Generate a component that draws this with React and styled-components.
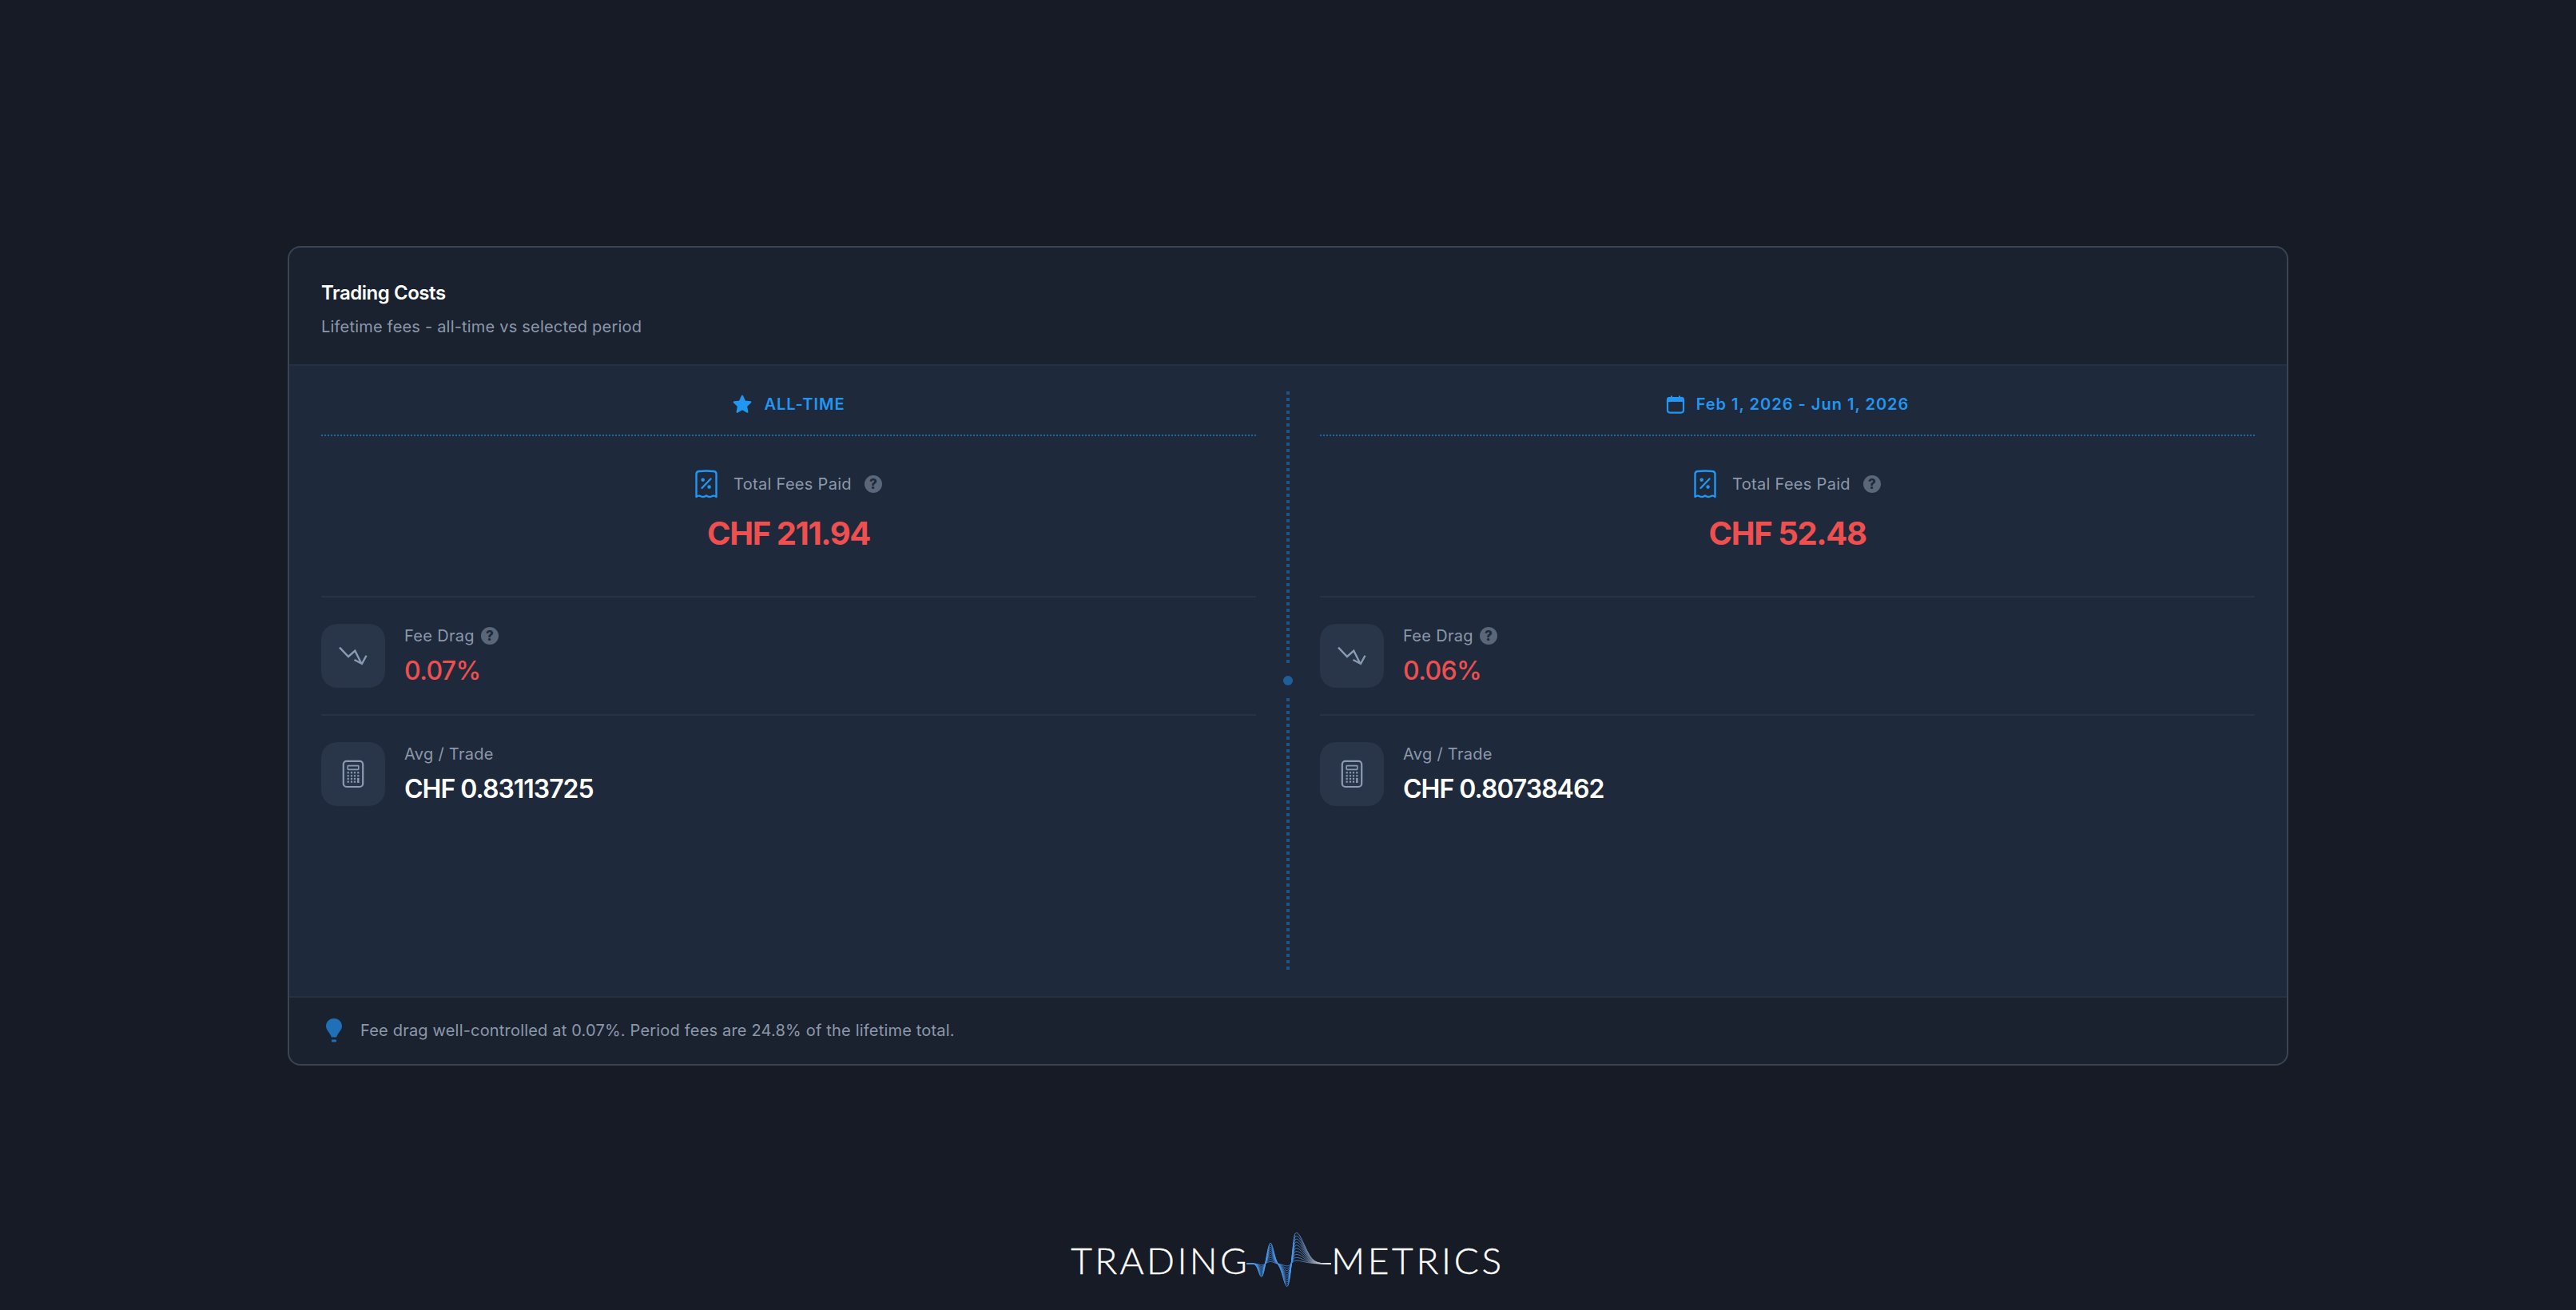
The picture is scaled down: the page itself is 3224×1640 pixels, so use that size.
import React from "react";
import styled, {createGlobalStyle} from "styled-components";

const GlobalStyle = createGlobalStyle`
  html, body {
    margin: 0;
    background: #161b26;
  }
  * {
    box-sizing: border-box;
  }
`

const Page = styled.div`
  width: 3224px;
  height: 1640px;
  padding-top: 308px;
  display: flex;
  flex-direction: column;
  align-items: center;
  overflow: hidden;
  font-family: Inter, "Liberation Sans", sans-serif;
`

const Card = styled.section`
  width: 2504px;
  height: 1026px;
  display: flex;
  flex-direction: column;
  border: 2px solid #3a4452;
  border-radius: 16px;
  background: #1a2230;
  overflow: hidden;
`

const CardHeader = styled.header`
  height: 148px;
  padding: 39px 40px 0;
  border-bottom: 2px solid #253041;
`

const Title = styled.h2`
  margin: 0;
  font-size: 24px;
  line-height: 36px;
  font-weight: 600;
  letter-spacing: -.45px;
  color: #fff;
`

const Subtitle = styled.p`
  margin: 10px 0 0;
  font-size: 20px;
  line-height: 28px;
  letter-spacing: .2px;
  color: #8c98aa;
`

const CardBody = styled.div`
  flex: 1;
  display: flex;
  padding: 32px 40px 33px;
  background: #1e293b;
`

const Column = styled.div`
  flex: 1;
  min-width: 0;
`

const Divider = styled.div`
  position: relative;
  width: 80px;
  flex: none;
  display: flex;
  justify-content: center;
`

const DottedLine = styled.div`
  width: 4px;
  height: 100%;
  background: repeating-linear-gradient(to bottom, #1f5484 0 4px, transparent 4px 8px);
`

const DividerDot = styled.span`
  position: absolute;
  top: 50%;
  left: 50%;
  width: 36px;
  height: 36px;
  transform: translate(-50%, -50%);
  display: flex;
  align-items: center;
  justify-content: center;
  background: #1e293b;

  &::after {
    content: "";
    width: 12px;
    height: 12px;
    border-radius: 50%;
    background: #1f5f99;
  }
`

const PeriodHeader = styled.div`
  height: 56px;
  padding-bottom: 22px;
  display: flex;
  align-items: center;
  justify-content: center;
  gap: 14px;
  border-bottom: 2px dotted #1f669f;
  color: #2196f3;
  font-size: 20px;
  font-weight: 600;
  letter-spacing: 1px;
`

const Hero = styled.div`
  height: 200px;
  padding-top: 42px;
  display: flex;
  flex-direction: column;
  align-items: center;
`

const HeroLabel = styled.div`
  height: 36px;
  display: flex;
  align-items: center;
  gap: 20px;
`

const HeroLabelHelp = styled.span`
  display: inline-flex;
  margin-left: -4px;
`

const LabelText = styled.span`
  font-size: 20px;
  letter-spacing: .3px;
  color: #8c98aa;
`

const HelpBadge = styled.span`
  width: 22px;
  height: 22px;
  border-radius: 50%;
  display: inline-flex;
  align-items: center;
  justify-content: center;
  background: #5a6679;
  color: #1e293b;
  font-size: 17px;
  font-weight: 800;
`

const HeroValue = styled.div`
  margin-top: 20px;
  font-size: 40px;
  line-height: 48px;
  font-weight: 700;
  letter-spacing: -1.4px;
  color: #ef4f4f;
`

const MetricRow = styled.div`
  display: flex;
  gap: 24px;
  padding: 33px 0;
  border-top: 2px solid #283445;
`

const MetricIcon = styled.div`
  width: 80px;
  height: 80px;
  flex: none;
  display: flex;
  align-items: center;
  justify-content: center;
  border-radius: 20px;
  background: #293548;
`

const MetricText = styled.div`
  display: flex;
  flex-direction: column;
  padding-top: 1px;
`

const MetricLabel = styled.div`
  height: 28px;
  display: flex;
  align-items: center;
  gap: 8px;
`

const MetricValue = styled.div`
  margin-top: 10px;
  font-size: 32px;
  line-height: 40px;
  font-weight: ${p => p.$negative ? 500 : 600};
  letter-spacing: ${p => p.$negative ? "-.6px" : "-1px"};
  color: ${p => p.$negative ? "#ef4f4f" : "#fff"};
`

const CardFooter = styled.footer`
  height: 85px;
  padding: 0 40px 2px 45px;
  display: flex;
  align-items: center;
  gap: 22px;
  border-top: 2px solid #253041;
`

const Insight = styled.span`
  font-size: 20px;
  letter-spacing: .19px;
  color: #8c98aa;
`

const Logo = styled.div`
  margin: 210px 1px 0 0;
  display: flex;
  align-items: center;
  height: 68px;
`

const LogoWord = styled.span`
  font-family: Lato, Inter, sans-serif;
  font-size: 46px;
  line-height: 68px;
  font-weight: 300;
  letter-spacing: ${p => p.$spacing}px;
  -webkit-text-stroke: .4px #fff;
  color: #fff;
`

const WaveHolder = styled.span`
  display: inline-flex;
  margin-left: -4px;
`

const StarIcon = () => (
    <svg width="26" height="26" viewBox="0 0 24 24" fill="#2196f3" stroke="#2196f3" strokeWidth="2" strokeLinejoin="round">
        <path d="M12 2.5l2.9 6.3 6.6.8-4.9 4.6 1.3 6.8-5.9-3.4-5.9 3.4 1.3-6.8-4.9-4.6 6.6-.8z"/>
    </svg>
)

const CalendarIcon = () => (
    <svg width="24" height="24" viewBox="0 0 24 24" fill="none" stroke="#2196f3" strokeWidth="2.2">
        <rect x="2" y="4" width="20" height="18.6" rx="3"/>
        <path d="M2 6.5a2.5 2.5 0 0 1 2.5-2.5h15a2.5 2.5 0 0 1 2.5 2.5V8H2z" fill="#2196f3"/>
        <path d="M7 1.5V5M17 1.5V5" strokeWidth="2"/>
    </svg>
)

const ReceiptIcon = () => (
    <svg width="28" height="36" viewBox="0 0 28 36" fill="none" stroke="#2196f3" strokeWidth="2.4" strokeLinecap="round" strokeLinejoin="round">
        <path d="M1.5 34V5.5Q1.5 2.5 4.5 2Q14 1 23.5 2Q26.5 2.5 26.5 5.5V34Q23.8 31.5 20.5 33.5Q17.2 35 14 32.5Q10.8 35 7.5 33.5Q4.2 31.5 1.5 34Z"/>
        <path d="M8.5 23L19.5 11.5"/>
        <circle cx="9.7" cy="12.7" r="1.1" fill="#2196f3"/>
        <circle cx="17.6" cy="21.6" r="1.1" fill="#2196f3"/>
    </svg>
)

const TrendIcon = () => (
    <svg width="40" height="40" viewBox="0 0 40 40" fill="none" stroke="#8a9bb3" strokeWidth="2.4" strokeLinejoin="miter">
        <path d="M3 9.7L14 21L22.3 13.7L30 29"/>
        <path d="M21.5 25L31 30L36.5 19.7"/>
    </svg>
)

const CalculatorIcon = () => {
    const xs = [13.7, 18, 22, 26.3]
    const ys = [18.3, 22.3, 26, 29.7]
    return (
        <svg width="40" height="40" viewBox="0 0 40 40" fill="none">
            <rect x="7.8" y="3.8" width="24.4" height="32.2" rx="4" stroke="#8a9bb3" strokeWidth="2.2"/>
            <rect x="13.2" y="9.6" width="13.6" height="4.8" rx=".6" stroke="#8a9bb3" strokeWidth="1.6"/>
            {ys.map((y) => xs.map((x) => (
                <rect key={x + "-" + y} x={x - 1.1} y={y - 1.1} width="2.2" height="2.2" fill="#8a9bb3"/>
            )))}
            <rect x="25.2" y="25" width="2.2" height="6" fill="#8a9bb3"/>
        </svg>
    )
}

const BulbIcon = () => (
    <svg width="22" height="32" viewBox="0 0 22 32">
        <path d="M11 1C5 1 1 5.6 1 10.6c0 4.5 3.5 7.2 5.8 11.3.5 1 .8 1.6 1.2 2.6h6c.4-1 .7-1.6 1.2-2.6 2.3-4.1 5.8-6.8 5.8-11.3C21 5.6 17 1 11 1z" fill="#1f70b8"/>
        <rect x="8" y="27.4" width="6" height="3" rx=".6" fill="#1f70b8"/>
    </svg>
)

// peaks of the wave, all measured from the baseline of the logo
const wavePeaks = [
    {x: 19, h: 17, l: 3.6, r: 3.6},
    {x: 30, h: -26, l: 4, r: 4},
    {x: 51, h: 29, l: 5, r: 4.5},
    {x: 61, h: -40, l: 3.4, r: 11},
]

const waveY = (x, scale) => {
    let y = 0
    wavePeaks.forEach((p) => {
        const s = x < p.x ? p.l : p.r
        y += p.h * Math.exp(-((x - p.x) ** 2) / (2 * s * s))
    })
    return 40 + y * scale
}

const wavePath = (scale) => {
    const pts = []
    for (let x = 0; x <= 106; x += .5) {
        pts.push(x + " " + waveY(x, scale).toFixed(2))
    }
    return "M" + pts.join("L")
}

const waveScales = [1, .9, .8, .7, .6, .5, .4, .3, .2, .1]

const LogoWave = () => (
    <svg width="106" height="72" viewBox="0 0 106 72" fill="none">
        <defs>
            <linearGradient id="waveFill" x1="0" x2="106" y1="0" y2="0" gradientUnits="userSpaceOnUse">
                <stop offset="0" stopColor="#4a97ee"/>
                <stop offset=".55" stopColor="#4a97ee"/>
                <stop offset=".8" stopColor="#9aa6b8"/>
                <stop offset="1" stopColor="#ffffff"/>
            </linearGradient>
        </defs>
        {waveScales.map((s) => (
            <path key={s} d={wavePath(s)} stroke="url(#waveFill)" strokeWidth="1" opacity={s === 1 ? 1 : .8}/>
        ))}
    </svg>
)

const Help = () => <HelpBadge>?</HelpBadge>

function PeriodColumn({icon, period, total, drag, avg}) {
    return (
        <Column>
            <PeriodHeader>{icon}{period}</PeriodHeader>
            <Hero>
                <HeroLabel>
                    <ReceiptIcon/>
                    <LabelText>Total Fees Paid</LabelText>
                    <HeroLabelHelp><Help/></HeroLabelHelp>
                </HeroLabel>
                <HeroValue>{total}</HeroValue>
            </Hero>
            <MetricRow>
                <MetricIcon><TrendIcon/></MetricIcon>
                <MetricText>
                    <MetricLabel>
                        <LabelText>Fee Drag</LabelText>
                        <Help/>
                    </MetricLabel>
                    <MetricValue $negative>{drag}</MetricValue>
                </MetricText>
            </MetricRow>
            <MetricRow>
                <MetricIcon><CalculatorIcon/></MetricIcon>
                <MetricText>
                    <MetricLabel>
                        <LabelText>Avg / Trade</LabelText>
                    </MetricLabel>
                    <MetricValue>{avg}</MetricValue>
                </MetricText>
            </MetricRow>
        </Column>
    )
}

export default function App() {
    return (
        <Page>
            <GlobalStyle/>
            <Card>
                <CardHeader>
                    <Title>Trading Costs</Title>
                    <Subtitle>Lifetime fees - all-time vs selected period</Subtitle>
                </CardHeader>
                <CardBody>
                    <PeriodColumn icon={<StarIcon/>} period="ALL-TIME" total="CHF 211.94" drag="0.07%" avg="CHF 0.83113725"/>
                    <Divider>
                        <DottedLine/>
                        <DividerDot/>
                    </Divider>
                    <PeriodColumn icon={<CalendarIcon/>} period="Feb 1, 2026 - Jun 1, 2026" total="CHF 52.48" drag="0.06%" avg="CHF 0.80738462"/>
                </CardBody>
                <CardFooter>
                    <BulbIcon/>
                    <Insight>Fee drag well-controlled at 0.07%. Period fees are 24.8% of the lifetime total.</Insight>
                </CardFooter>
            </Card>
            <Logo>
                <LogoWord $spacing={3.4}>TRADING</LogoWord>
                <WaveHolder><LogoWave/></WaveHolder>
                <LogoWord $spacing={3.7}>METRICS</LogoWord>
            </Logo>
        </Page>
    )
}
